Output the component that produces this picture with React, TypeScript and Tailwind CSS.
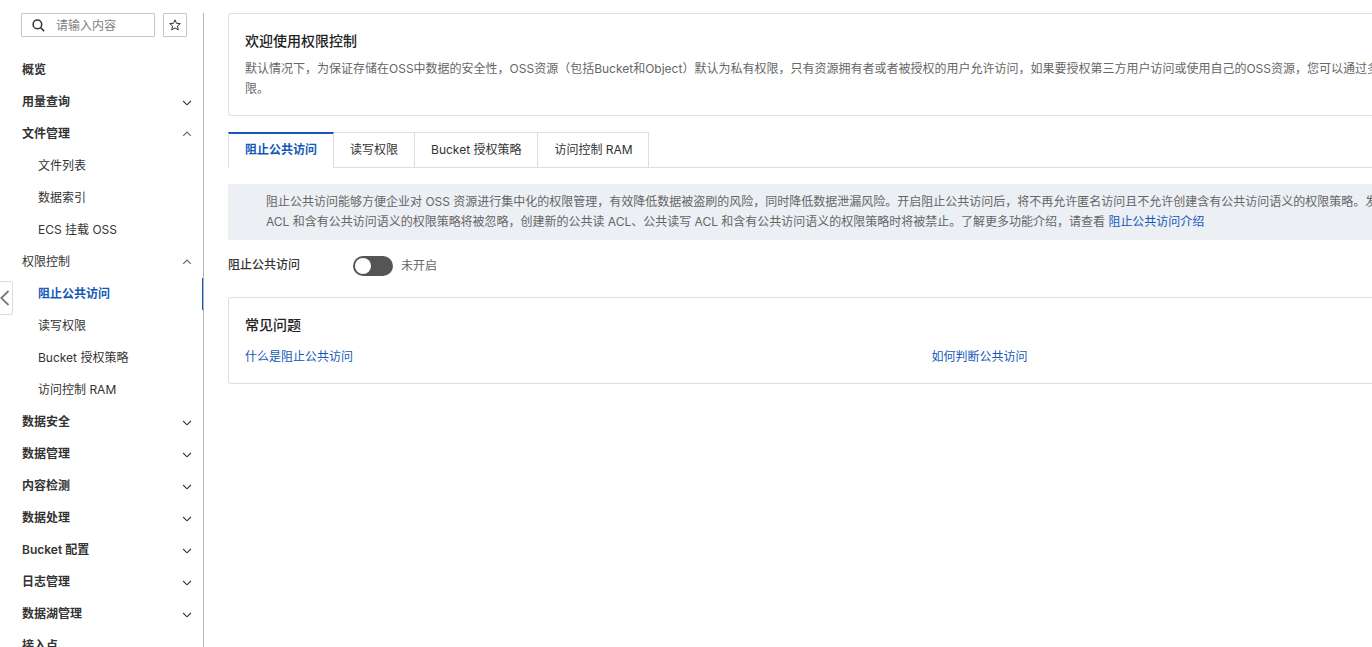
import React, { useState } from 'react';
import clsx from 'clsx';

type NavItem = {
  label: string;
  arrow?: 'up' | 'down';
  plain?: boolean;
  children?: string[];
};

const navItems: NavItem[] = [
  { label: '概览' },
  { label: '用量查询', arrow: 'down' },
  {
    label: '文件管理',
    arrow: 'up',
    children: ['文件列表', '数据索引', 'ECS 挂载 OSS'],
  },
  {
    label: '权限控制',
    arrow: 'up',
    plain: true,
    children: ['阻止公共访问', '读写权限', 'Bucket 授权策略', '访问控制 RAM'],
  },
  { label: '数据安全', arrow: 'down' },
  { label: '数据管理', arrow: 'down' },
  { label: '内容检测', arrow: 'down' },
  { label: '数据处理', arrow: 'down' },
  { label: 'Bucket 配置', arrow: 'down' },
  { label: '日志管理', arrow: 'down' },
  { label: '数据湖管理', arrow: 'down' },
  { label: '接入点' },
];

const tabs = ['阻止公共访问', '读写权限', 'Bucket 授权策略', '访问控制 RAM'];

const Arrow = ({ dir }: { dir: 'up' | 'down' }) => (
  <svg
    width="10"
    height="6"
    viewBox="0 0 10 6"
    fill="none"
    stroke={dir === 'up' ? '#666' : '#333'}
    strokeWidth="1.1"
    className={dir === 'down' ? 'mt-0.5' : ''}
  >
    <path d={dir === 'up' ? 'M1.2 4.8L5 1l3.8 3.8' : 'M1.2 1L5 4.8 8.8 1'} />
  </svg>
);

const Sidebar = () => {
  const [active, setActive] = useState('阻止公共访问');

  return (
    <aside className="mt-[13px] w-[204px] shrink-0 border-r border-[#b4b6bc]">
      <div className="flex gap-2 pl-[21px]">
        <div className="flex h-6 w-[134px] items-center rounded-[1px] border border-[#c0c6cc] pl-2.5">
          <svg
            width="13"
            height="13"
            viewBox="0 0 13 13"
            fill="none"
            stroke="#333"
            strokeWidth="1.5"
          >
            <circle cx="5.4" cy="5.4" r="4.3" />
            <path d="M8.5 8.5l3.6 3.6" />
          </svg>
          <input
            placeholder="请输入内容"
            className="ml-[11px] w-20 pt-px outline-none placeholder:text-[#808080]"
          />
        </div>
        <button className="flex size-6 items-center justify-center rounded-[1px] border border-[#c0c6cc]">
          <svg
            width="12"
            height="12"
            viewBox="0 0 12 12"
            fill="none"
            stroke="#333"
            strokeWidth="1"
            strokeLinejoin="round"
          >
            <path d="M6 .8l1.5 3.5 3.8.3-2.9 2.5.9 3.8L6 8.9l-3.3 2 .9-3.8L.7 4.6l3.8-.3z" />
          </svg>
        </button>
      </div>
      <nav className="mt-[17px]">
        {navItems.map((item) => (
          <div key={item.label}>
            <div
              className={clsx(
                'flex h-8 items-center justify-between pr-[11px] pl-[22px] text-[#333]',
                !item.plain && 'font-semibold'
              )}
            >
              {item.label}
              {item.arrow && <Arrow dir={item.arrow} />}
            </div>
            {item.children?.map((child) => (
              <div
                key={child}
                onClick={() => setActive(child)}
                className={clsx(
                  'flex h-8 cursor-pointer items-center pl-[38px]',
                  child === active
                    ? 'border-r border-[#1558b8] font-semibold text-[#1558b8]'
                    : 'text-[#333]'
                )}
              >
                {child}
              </div>
            ))}
          </div>
        ))}
      </nav>
    </aside>
  );
};

const App = () => {
  const [tab, setTab] = useState(tabs[0]);
  const [enabled, setEnabled] = useState(false);

  return (
    <div className="relative flex h-[647px] overflow-hidden bg-white font-['Inter','Noto_Sans_CJK_SC',sans-serif] text-xs leading-5 text-[#333]">
      <Sidebar />
      {/* Collapse handle */}
      <button className="absolute top-[281px] -left-px flex h-[34px] w-3.5 items-center rounded-r-[2px] border border-[#dcdcdc] bg-white">
        <svg
          width="10"
          height="16"
          viewBox="0 0 10 16"
          fill="none"
          stroke="#777"
          strokeWidth="1.8"
        >
          <path d="M8.5 1L1.2 8l7.3 7" />
        </svg>
      </button>

      <main className="ml-6 w-[1407px] shrink-0 pt-[13px] whitespace-nowrap">
        <section className="h-[103px] rounded-[3px] border border-[#dedede] px-4 pt-[17px]">
          <h2 className="text-sm leading-5 font-medium text-[#222]">
            欢迎使用权限控制
          </h2>
          <p className="mt-2 text-[#666]">
            默认情况下，为保证存储在OSS中数据的安全性，OSS资源（包括Bucket和Object）默认为私有权限，只有资源拥有者或者被授权的用户允许访问，如果要授权第三方用户访问或使用自己的OSS资源，您可以通过多种方式授予访问权
            <br />
            限。
          </p>
        </section>

        <div className="mt-4 flex h-9 border-b border-[#dedede]">
          {tabs.map((name) => (
            <button
              key={name}
              onClick={() => setTab(name)}
              className={clsx(
                'h-9 border-r border-[#dedede] px-4 last:pr-[15px]',
                name === tab
                  ? 'border-t-2 border-l border-t-[#1558b8] bg-white pb-[3px] font-semibold text-[#1558b8]'
                  : 'border-t pb-0.5'
              )}
            >
              {name}
            </button>
          ))}
        </div>

        <div className="mt-4 h-14 rounded-[1px] bg-[#eceff4] pt-2 pl-[38px] text-[#666]">
          <p>
            阻止公共访问能够方便企业对 OSS
            资源进行集中化的权限管理，有效降低数据被盗刷的风险，同时降低数据泄漏风险。开启阻止公共访问后，将不再允许匿名访问且不允许创建含有公共访问语义的权限策略。发现已有的公共
          </p>
          <p className="tracking-[-0.01px]">
            ACL 和含有公共访问语义的权限策略将被忽略，创建新的公共读
            ACL、公共读写 ACL
            和含有公共访问语义的权限策略时将被禁止。了解更多功能介绍，请查看{' '}
            <a className="text-[#1558b8]">阻止公共访问介绍</a>
          </p>
        </div>

        <div className="mt-4 flex h-5">
          <span className="-mt-px w-[125px] font-medium">阻止公共访问</span>
          <button
            role="switch"
            aria-checked={enabled}
            onClick={() => setEnabled(!enabled)}
            className={clsx(
              'flex h-5 w-10 items-center rounded-full px-0.5',
              enabled ? 'justify-end bg-[#1558b8]' : 'bg-[#555]'
            )}
          >
            <span className="size-4 rounded-full bg-white" />
          </button>
          <span className="ml-2 text-[#666]">
            {enabled ? '已开启' : '未开启'}
          </span>
        </div>

        <section className="mt-[21px] h-[87px] rounded-[3px] border border-[#dedede] px-4 pt-[17px]">
          <h2 className="text-sm leading-5 font-medium text-[#222]">
            常见问题
          </h2>
          <div className="mt-3 grid grid-cols-2 text-[#1558b8]">
            <a>什么是阻止公共访问</a>
            <a>如何判断公共访问</a>
          </div>
        </section>
      </main>
    </div>
  );
};

export default App;
